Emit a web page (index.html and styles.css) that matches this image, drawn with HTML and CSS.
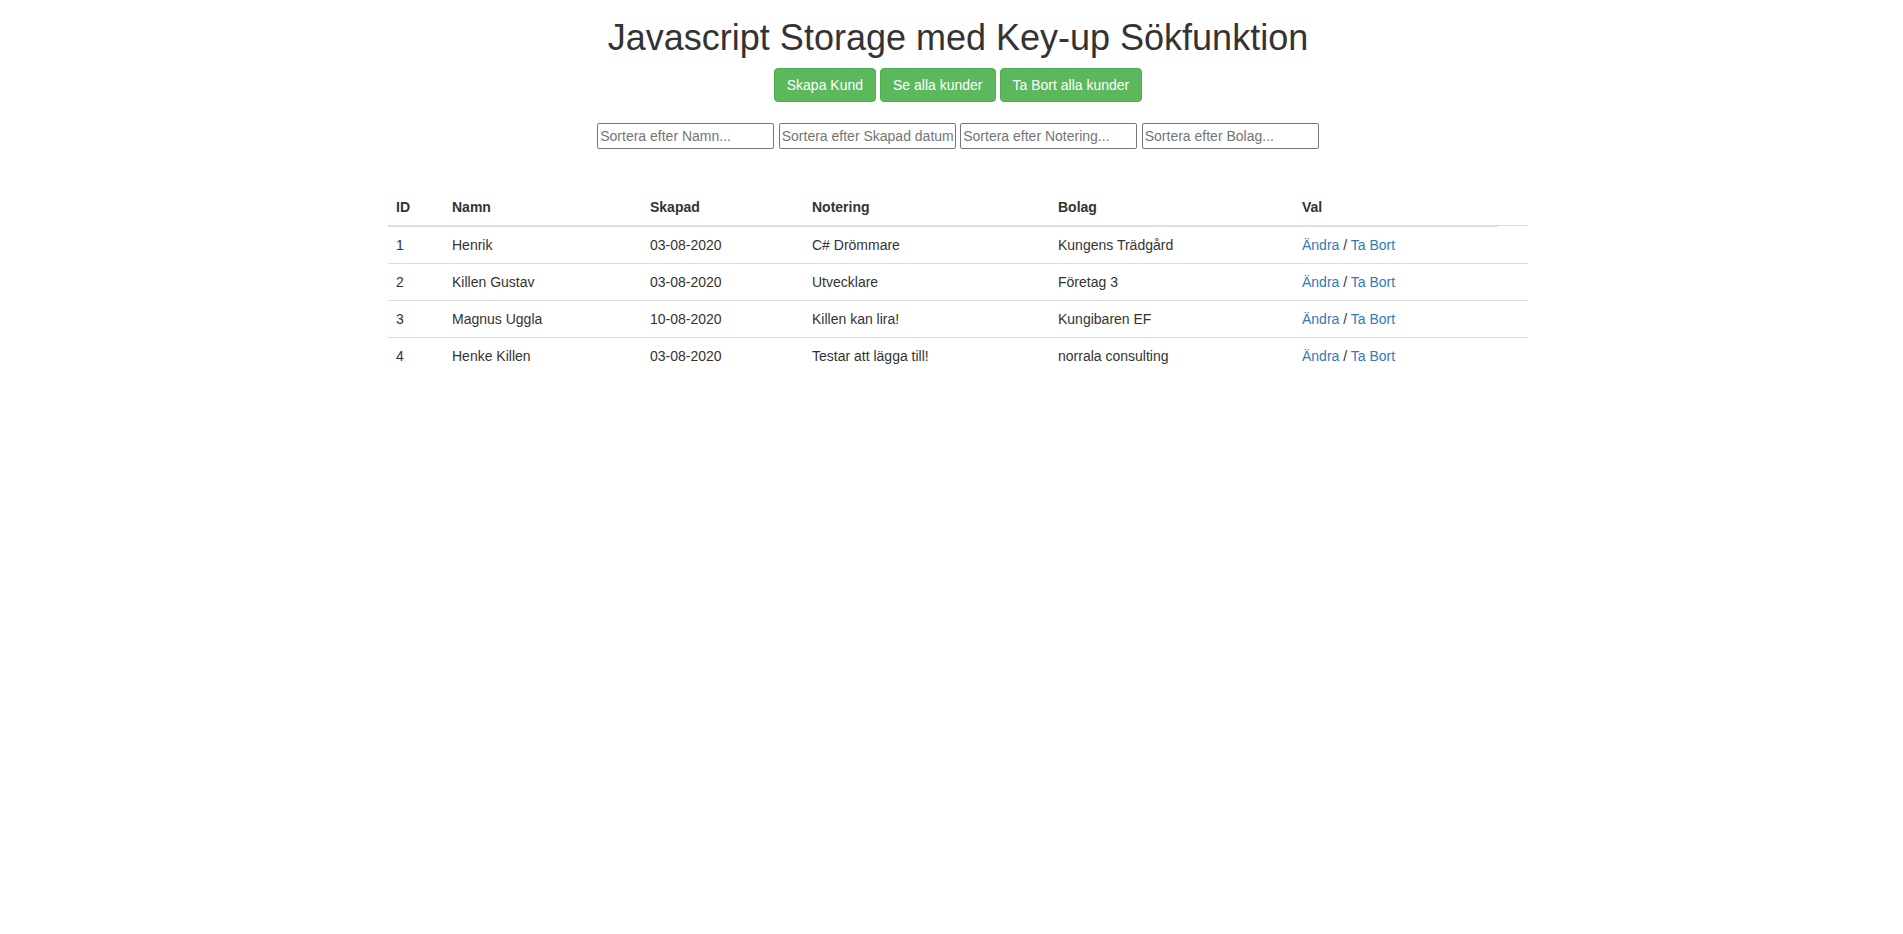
FILE: index.html
```html
<!DOCTYPE html>
<html lang="sv">
<head>
<meta charset="utf-8">
<title>Javascript Storage</title>
<link rel="stylesheet" href="styles.css">
</head>
<body>
<div class="page">
  <div class="container">
    <h1 class="title">Javascript Storage med Key-up Sökfunktion</h1>
    <div class="actions">
      <button class="btn">Skapa Kund</button>
      <button class="btn">Se alla kunder</button>
      <button class="btn">Ta Bort alla kunder</button>
    </div>
    <div class="filters">
      <input class="filter" type="text" placeholder="Sortera efter Namn...">
      <input class="filter" type="text" placeholder="Sortera efter Skapad datum...">
      <input class="filter" type="text" placeholder="Sortera efter Notering...">
      <input class="filter" type="text" placeholder="Sortera efter Bolag...">
    </div>
    <table class="table">
      <colgroup>
        <col class="c-id"><col class="c-namn"><col class="c-skapad"><col class="c-not"><col class="c-bolag"><col class="c-val"><col class="c-extra">
      </colgroup>
      <thead>
        <tr><th>ID</th><th>Namn</th><th>Skapad</th><th>Notering</th><th>Bolag</th><th>Val</th></tr>
      </thead>
      <tbody>
        <tr><td>1</td><td>Henrik</td><td>03-08-2020</td><td>C# Drömmare</td><td>Kungens Trädgård</td><td><a href="#">Ändra</a> <span class="sep">/</span> <a href="#">Ta Bort</a></td><td></td></tr>
        <tr><td>2</td><td>Killen Gustav</td><td>03-08-2020</td><td>Utvecklare</td><td>Företag 3</td><td><a href="#">Ändra</a> <span class="sep">/</span> <a href="#">Ta Bort</a></td><td></td></tr>
        <tr><td>3</td><td>Magnus Uggla</td><td>10-08-2020</td><td>Killen kan lira!</td><td>Kungibaren EF</td><td><a href="#">Ändra</a> <span class="sep">/</span> <a href="#">Ta Bort</a></td><td></td></tr>
        <tr><td>4</td><td>Henke Killen</td><td>03-08-2020</td><td>Testar att lägga till!</td><td>norrala consulting</td><td><a href="#">Ändra</a> <span class="sep">/</span> <a href="#">Ta Bort</a></td><td></td></tr>
      </tbody>
    </table>
  </div>
</div>
</body>
</html>
```

FILE: styles.css
```css
* { box-sizing: border-box; }
html, body { margin: 0; padding: 0; background: #fff; }
body {
  font-family: "Liberation Sans", Arial, Helvetica, sans-serif;
  font-size: 14px;
  line-height: 1.42857143;
  color: #333;
}
.page { padding-left: 13px; }
.container { width: 1140px; margin: 0 auto; }
.title {
  text-align: center;
  font-size: 36px;
  font-weight: 500;
  line-height: 1.1;
  margin: 18px 0 10px;
}
.actions {
  display: flex;
  justify-content: center;
  gap: 4px;
}
.btn {
  font-family: inherit;
  font-size: 14px;
  line-height: 1.42857143;
  padding: 6px 12px;
  color: #fff;
  background: #5cb85c;
  border: 1px solid #4cae4c;
  border-radius: 4px;
  cursor: pointer;
}
.filters {
  display: flex;
  justify-content: center;
  gap: 4.5px;
  margin-top: 21px;
}
.filter {
  width: 177px;
  height: 26px;
  font-family: inherit;
  font-size: 14px;
  line-height: 20px;
  padding: 2px 2px;
  border: 1px solid #767676;
  border-radius: 2px;
  color: #333;
}
.filter::placeholder { color: #757575; }
.table {
  width: 1140px;
  table-layout: fixed;
  border-collapse: collapse;
  border-spacing: 0;
  margin-top: 40px;
  margin-bottom: 20px;
}
.c-id { width: 56px; }
.c-namn { width: 198px; }
.c-skapad { width: 162px; }
.c-not { width: 246px; }
.c-bolag { width: 244px; }
.c-val { width: 204px; }
.c-extra { width: 30px; }
.table th {
  text-align: left;
  font-weight: bold;
  padding: 8px;
  line-height: 20px;
  vertical-align: bottom;
  border-bottom: 2px solid #ddd;
}
.table td {
  padding: 8px;
  line-height: 20px;
  vertical-align: top;
  border-top: 1px solid #ddd;
  white-space: nowrap;
}
.table a { color: #337ab7; text-decoration: none; }
.sep { color: #333; }
```
